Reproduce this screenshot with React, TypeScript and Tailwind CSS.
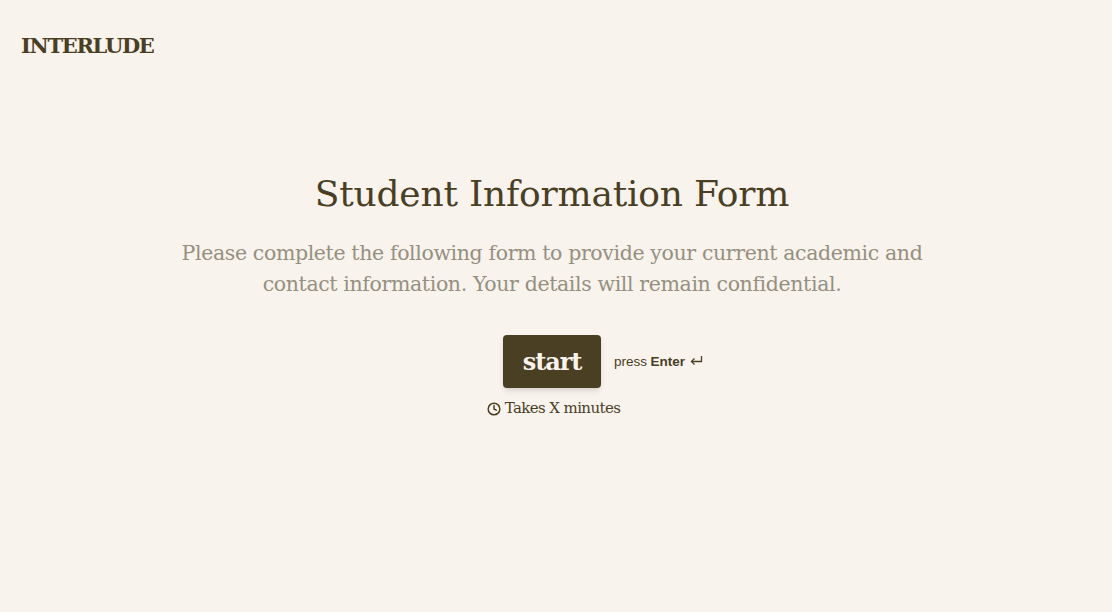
import { Clock } from "lucide-react";

const SERIF = "font-['DejaVu_Serif',serif]";

const App = () => {
  return (
    <div className={`min-h-screen bg-[#f8f3ed] text-[#4a3e23] ${SERIF} flex flex-col`}>
      <header className="px-[21px] pt-[32px]">
        <div className="text-[21px] leading-[28px] font-bold tracking-[-1.3px]">INTERLUDE</div>
      </header>

      <main className="flex flex-col items-center pt-[112px] pr-[8px]">
        <h1 className="text-[36px] leading-[44px] tracking-[-0.2px] font-normal">Student Information Form</h1>
        <p className="mt-[22px] w-[780px] text-center text-[20.5px] leading-[31px] tracking-[-0.38px] text-[#959080]">
          Please complete the following form to provide your current academic and
          <br />
          contact information. Your details will remain confidential.
        </p>

        <div className="relative mt-[35px]">
          <button
            type="button"
            className="w-[98px] h-[53px] rounded-[4px] bg-[#4a3e23] text-[#f8f3ed] text-[24px] font-bold tracking-[-1.1px] shadow-md"
          >
            start
          </button>
          <div className="absolute left-[111px] top-[1px] h-[53px] flex items-center whitespace-nowrap font-['Liberation_Sans',sans-serif] text-[13.5px] text-[#4a3e23]">
            press <b className="ml-[3.5px]">Enter</b>
            <svg className="ml-[4.5px] mb-[4px]" width="13" height="11" viewBox="0 0 13 11" fill="none" stroke="currentColor" strokeWidth="1.3">
              <path d="M11.5 1v5.5H1.5" />
              <path d="M4.5 3.5l-3 3 3 3" />
            </svg>
          </div>
        </div>

        <div className="mt-[10px] ml-[3px] flex items-center gap-[4px] text-[15px] leading-[20px] tracking-[-0.6px]">
          <Clock className="size-[14px] mt-[1px]" strokeWidth={2.5} />
          Takes X minutes
        </div>
      </main>
    </div>
  );
};

export default App;
